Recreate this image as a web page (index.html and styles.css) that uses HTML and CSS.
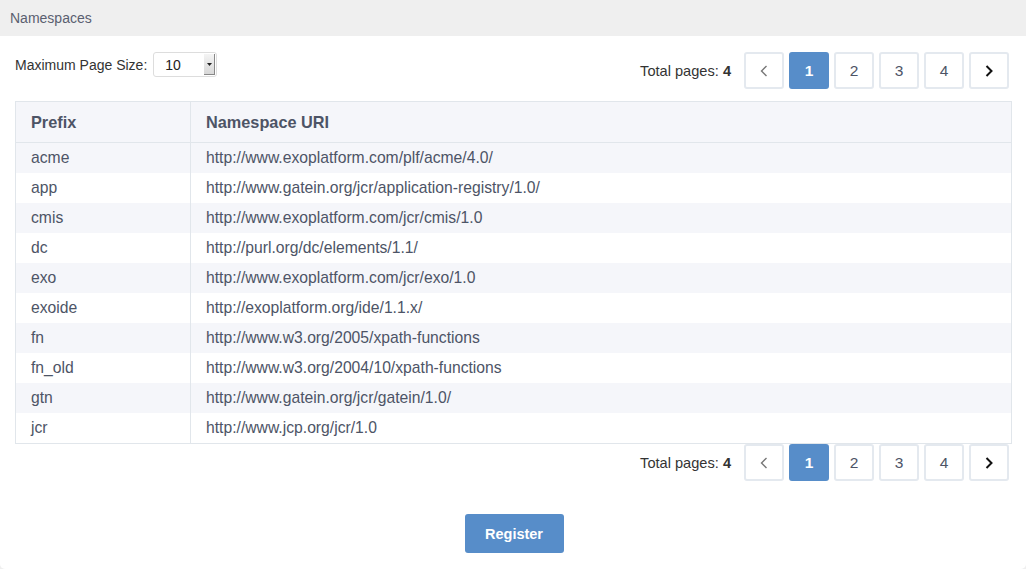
FILE: index.html
```html
<!DOCTYPE html>
<html>
<head>
<meta charset="utf-8">
<link rel="stylesheet" href="styles.css">
</head>
<body>
<div class="panel">
  <div class="title">Namespaces</div>
  <div class="content">
    <div class="toolbar">
      <div class="pagesize">
        <span>Maximum Page Size:</span>
        <div class="select"><span class="val">10</span><span class="arrow"><svg width="5" height="3" viewBox="0 0 5 3"><path d="M0 0h5L2.5 3z" fill="#222"/></svg></span></div>
      </div>
      <div class="pager">
        <span class="total">Total pages: <b>4</b></span>
        <a class="pbtn prev"><svg width="8" height="12" viewBox="0 0 8 12"><path d="M6.5 1L1.5 6l5 5" fill="none" stroke="#777" stroke-width="1.4"/></svg></a>
        <a class="pbtn active">1</a>
        <a class="pbtn">2</a>
        <a class="pbtn">3</a>
        <a class="pbtn">4</a>
        <a class="pbtn next"><svg width="8" height="12" viewBox="0 0 8 12"><path d="M1.5 1l5 5-5 5" fill="none" stroke="#111" stroke-width="2"/></svg></a>
      </div>
    </div>
    <table class="grid">
      <thead><tr><th class="c1">Prefix</th><th>Namespace URI</th></tr></thead>
      <tbody>
        <tr><td>acme</td><td>http://www.exoplatform.com/plf/acme/4.0/</td></tr>
        <tr><td>app</td><td>http://www.gatein.org/jcr/application-registry/1.0/</td></tr>
        <tr><td>cmis</td><td>http://www.exoplatform.com/jcr/cmis/1.0</td></tr>
        <tr><td>dc</td><td>http://purl.org/dc/elements/1.1/</td></tr>
        <tr><td>exo</td><td>http://www.exoplatform.com/jcr/exo/1.0</td></tr>
        <tr><td>exoide</td><td>http://exoplatform.org/ide/1.1.x/</td></tr>
        <tr><td>fn</td><td>http://www.w3.org/2005/xpath-functions</td></tr>
        <tr><td>fn_old</td><td>http://www.w3.org/2004/10/xpath-functions</td></tr>
        <tr><td>gtn</td><td>http://www.gatein.org/jcr/gatein/1.0/</td></tr>
        <tr><td>jcr</td><td>http://www.jcp.org/jcr/1.0</td></tr>
      </tbody>
    </table>
    <div class="pager bottom">
      <span class="total">Total pages: <b>4</b></span>
      <a class="pbtn prev"><svg width="8" height="12" viewBox="0 0 8 12"><path d="M6.5 1L1.5 6l5 5" fill="none" stroke="#777" stroke-width="1.4"/></svg></a>
      <a class="pbtn active">1</a>
      <a class="pbtn">2</a>
      <a class="pbtn">3</a>
      <a class="pbtn">4</a>
      <a class="pbtn next"><svg width="8" height="12" viewBox="0 0 8 12"><path d="M1.5 1l5 5-5 5" fill="none" stroke="#111" stroke-width="2"/></svg></a>
    </div>
    <div class="actions"><button class="btn-primary">Register</button></div>
  </div>
</div>
</body>
</html>
```
FILE: styles.css
```css
html, body {
  margin: 0;
  padding: 0;
  background: #efefef;
  font-family: "Liberation Sans", Arial, sans-serif;
}
.panel {
  width: 1026px;
  height: 569px;
  background: #fff;
  border-radius: 0 0 5px 5px;
  display: flex;
  flex-direction: column;
}
.title {
  height: 36px;
  background: #efefef;
  color: #5a6070;
  font-size: 14px;
  line-height: 36px;
  padding-left: 10px;
}
.content {
  padding: 16px 14px 0 15px;
}
.toolbar {
  display: flex;
  justify-content: space-between;
  align-items: flex-start;
}
.pagesize {
  display: flex;
  align-items: center;
  font-size: 14px;
  color: #333;
  gap: 6px;
  height: 25px;
}
.select {
  width: 62px;
  height: 23px;
  border: 1px solid #ddd;
  border-radius: 3px;
  display: flex;
  align-items: center;
  justify-content: space-between;
  box-sizing: content-box;
}
.select .val {
  padding-left: 11px;
  font-size: 14px;
  color: #222;
}
.select .arrow {
  width: 11px;
  height: 21px;
  margin-right: 1px;
  background: linear-gradient(#f4f4f4, #d8d8d8);
  border-right: 1px solid #888;
  border-bottom: 1px solid #888;
  display: flex;
  align-items: center;
  justify-content: center;
  box-sizing: border-box;
}
.pager {
  display: flex;
  align-items: center;
  gap: 5px;
  margin-right: 3px;
}
.pager .total {
  font-size: 14.6px;
  color: #333;
  margin-right: 8px;
}
.pbtn {
  width: 40px;
  height: 37px;
  box-sizing: border-box;
  border: 2px solid #e4e9ef;
  border-radius: 3px;
  display: flex;
  align-items: center;
  justify-content: center;
  font-size: 15.5px;
  color: #4d5466;
  background: #fff;
}
.pbtn.active {
  background: #578dc9;
  border-color: #578dc9;
  color: #fff;
  font-weight: bold;
}
.grid {
  margin-top: 12px;
  width: 997px;
  border-collapse: collapse;
  border: 1px solid #e1e6eb;
  font-size: 15.7px;
  color: #4d5466;
}
.grid th {
  text-align: left;
  height: 40px;
  background: #f5f6fa;
  font-weight: bold;
  font-size: 16.3px;
  padding: 0 15px;
  border-bottom: 1px solid #e1e6eb;
  border-left: 1px solid #e1e6eb;
}
.grid th.c1, .grid td:first-child { width: 144px; }
.grid td {
  height: 30px;
  padding: 0 15px;
  border-left: 1px solid #e1e6eb;
}
.grid tbody tr:nth-child(odd) td { background: #f5f6fa; }
.pager.bottom {
  justify-content: flex-end;
  margin-top: 0;
}
.actions {
  display: flex;
  justify-content: center;
  margin-top: 33px;
}
.btn-primary {
  width: 99px;
  height: 39px;
  background: #578dc9;
  color: #fff;
  border: none;
  border-radius: 3px;
  font-family: "Liberation Sans", Arial, sans-serif;
  font-weight: bold;
  font-size: 14.5px;
  margin-left: 1px;
}
```
